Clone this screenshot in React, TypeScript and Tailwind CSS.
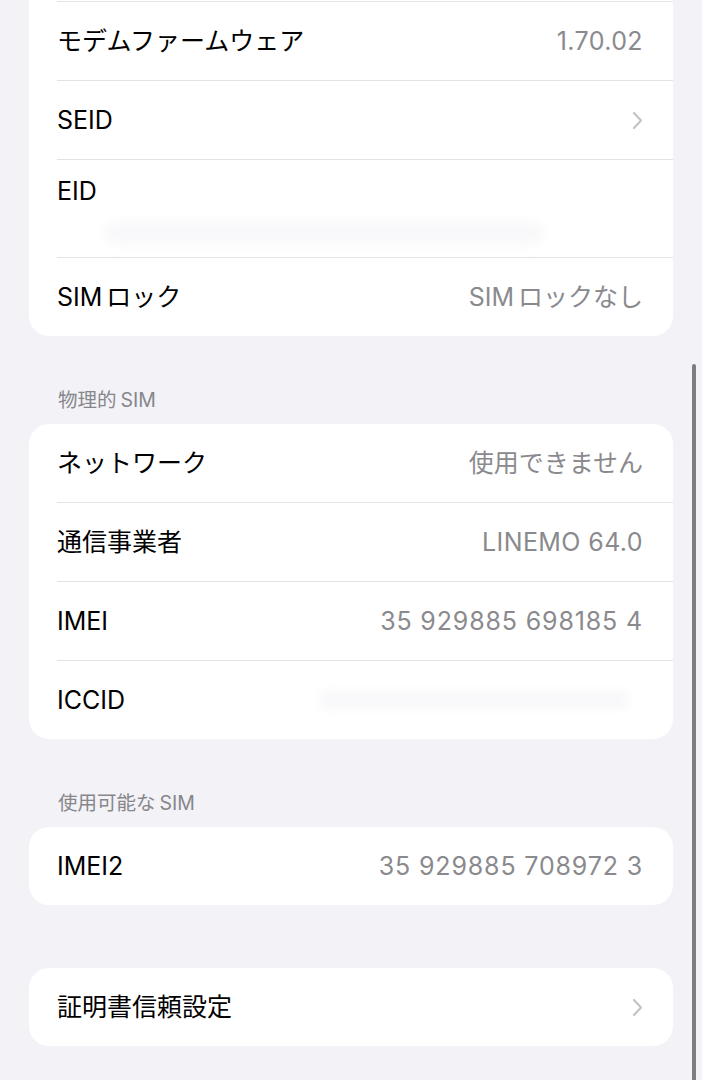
import { ReactNode } from 'react';

const font = { fontFamily: '"Inter", "Noto Sans CJK JP", sans-serif' };

function Chevron() {
  return (
    <svg width="11" height="19" viewBox="0 0 11 19" fill="none" className="shrink-0">
      <path d="M2 2L9 9.5L2 17" stroke="#c4c4c7" strokeWidth="2.2" strokeLinecap="round" strokeLinejoin="round" />
    </svg>
  );
}

function Divider() {
  return <div className="ml-[28px] h-px bg-[#e3e3e6]" />;
}

function Row({
  label,
  value,
  chevron,
  valueClass = '',
}: {
  label: ReactNode;
  value?: ReactNode;
  chevron?: boolean;
  valueClass?: string;
}) {
  return (
    <div className="flex h-[78px] items-center justify-between pl-[28px] pr-[30px]">
      <span className="text-[25px] leading-[30px] text-black">{label}</span>
      {value && <span className={`text-[25px] leading-[30px] text-[#8a8a8e] ${valueClass}`}>{value}</span>}
      {chevron && <Chevron />}
    </div>
  );
}

function Header({ children }: { children: ReactNode }) {
  return (
    <div className="pt-[52px] pb-[12px] pl-[29px] text-[19.5px] leading-[24px] text-[#86868b]">{children}</div>
  );
}

export default function App() {
  return (
    <div className="relative min-h-[1080px] overflow-hidden bg-[#f2f2f7] px-[29px]" style={font}>
      {/* top card, scrolled so its top is cut off */}
      <div className="rounded-b-[20px] bg-white">
        <div className="h-px" />
        <Divider />
        <Row label="モデムファームウェア" value="1.70.02" valueClass="tracking-[0.4px]" />
        <Divider />
        <Row label="SEID" chevron />
        <Divider />
        <div className="relative h-[97px] pl-[28px] pr-[30px] pt-[16px]">
          <span className="text-[25px] leading-[30px] text-black">EID</span>
          <div className="absolute left-[75px] top-[62px] h-[22px] w-[440px] rounded-full bg-[#f8f8fa] blur-[6px]" />
        </div>
        <Divider />
        <Row
          label={<><span className="mr-[4px]">SIM</span>ロック</>}
          value={<><span className="mr-[4px]">SIM</span>ロックなし</>}
        />
      </div>

      <Header>物理的<span className="ml-[4px]">SIM</span></Header>
      <div className="rounded-[20px] bg-white">
        <Row label="ネットワーク" value="使用できません" />
        <Divider />
        <Row label="通信事業者" value="LINEMO 64.0" valueClass="tracking-[0.4px]" />
        <Divider />
        <Row label="IMEI" value="35 929885 698185 4" valueClass="tracking-[0.85px]" />
        <Divider />
        <div className="relative">
          <Row label="ICCID" />
          <div className="absolute left-[290px] top-[30px] h-[18px] w-[310px] rounded-full bg-[#f8f8fa] blur-[5px]" />
        </div>
      </div>

      <Header>使用可能な<span className="ml-[4px]">SIM</span></Header>
      <div className="rounded-[20px] bg-white">
        <Row label="IMEI2" value="35 929885 708972 3" valueClass="tracking-[0.85px]" />
      </div>

      <div className="mt-[63px] rounded-[20px] bg-white">
        <Row label="証明書信頼設定" chevron />
      </div>

      {/* scroll indicator */}
      <div className="absolute right-[6px] top-[364px] h-[740px] w-[4px] rounded-full bg-[#7d7d82]" />
    </div>
  );
}
